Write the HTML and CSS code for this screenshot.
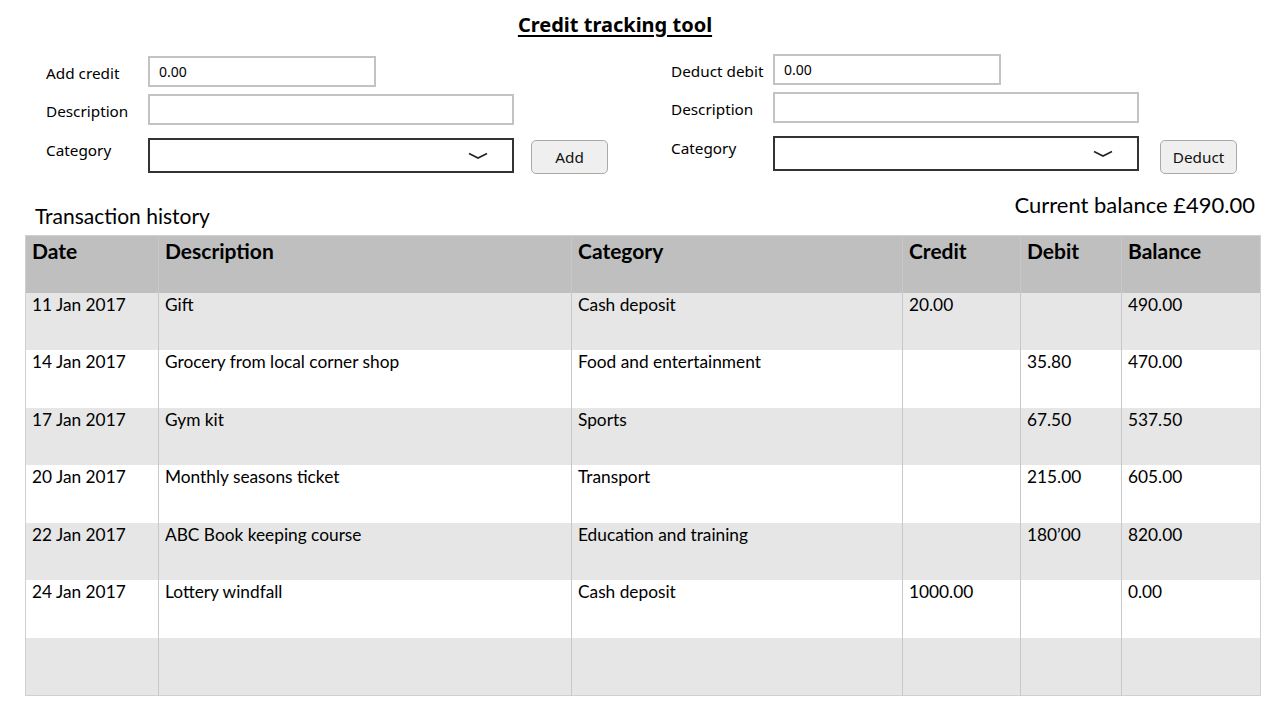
FILE: index.html
```html
<!DOCTYPE html>
<html>
<head>
<meta charset="utf-8">
<link rel="stylesheet" href="styles.css">
</head>
<body>
<h1 class="title">Credit tracking tool</h1>
<div class="forms">
  <div class="form">
    <label class="lbl l1">Add credit</label>
    <div class="field"><div class="input short">0.00</div></div>
    <label class="lbl l2">Description</label>
    <div class="field"><div class="input long"></div></div>
    <label class="lbl l3">Category</label>
    <div class="field row">
      <div class="select long"><svg class="chev" width="20" height="8" viewBox="0 0 20 8"><path d="M1 1.5 L10 6 L19 1.5" fill="none" stroke="#222" stroke-width="1.6"/></svg></div>
      <button class="btn add">Add</button>
    </div>
  </div>
  <div class="form right">
    <label class="lbl l1">Deduct debit</label>
    <div class="field"><div class="input short">0.00</div></div>
    <label class="lbl l2">Description</label>
    <div class="field"><div class="input long"></div></div>
    <label class="lbl l3">Category</label>
    <div class="field row">
      <div class="select long"><svg class="chev" width="20" height="8" viewBox="0 0 20 8"><path d="M1 1.5 L10 6 L19 1.5" fill="none" stroke="#222" stroke-width="1.6"/></svg></div>
      <button class="btn deduct">Deduct</button>
    </div>
  </div>
</div>
<div class="histhead">
  <div class="hist">Transaction history</div>
  <div class="bal">Current balance £490.00</div>
</div>
<table class="tx">
  <colgroup>
    <col class="c1"><col class="c2"><col class="c3"><col class="c4"><col class="c5"><col class="c6">
  </colgroup>
  <thead>
    <tr><th>Date</th><th>Description</th><th>Category</th><th>Credit</th><th>Debit</th><th>Balance</th></tr>
  </thead>
  <tbody>
    <tr><td>11 Jan 2017</td><td>Gift</td><td>Cash deposit</td><td>20.00</td><td></td><td>490.00</td></tr>
    <tr><td>14 Jan 2017</td><td>Grocery from local corner shop</td><td>Food and entertainment</td><td></td><td>35.80</td><td>470.00</td></tr>
    <tr><td>17 Jan 2017</td><td>Gym kit</td><td>Sports</td><td></td><td>67.50</td><td>537.50</td></tr>
    <tr><td>20 Jan 2017</td><td>Monthly seasons ticket</td><td>Transport</td><td></td><td>215.00</td><td>605.00</td></tr>
    <tr><td>22 Jan 2017</td><td>ABC Book keeping course</td><td>Education and training</td><td></td><td>180’00</td><td>820.00</td></tr>
    <tr><td>24 Jan 2017</td><td>Lottery windfall</td><td>Cash deposit</td><td>1000.00</td><td></td><td>0.00</td></tr>
    <tr><td></td><td></td><td></td><td></td><td></td><td></td></tr>
  </tbody>
</table>
</body>
</html>
```
FILE: styles.css
```css
* { box-sizing: border-box; }
body {
  margin: 0;
  background: #fff;
  color: #000;
  font-family: "Noto Sans", "Open Sans", sans-serif;
  width: 1275px;
  height: 707px;
  overflow: hidden;
}
.title {
  margin: 0;
  padding-top: 11px;
  padding-right: 45px;
  text-align: center;
  font-size: 20px;
  font-weight: bold;
  text-decoration: underline;
  text-underline-offset: 3px;
  text-decoration-thickness: 2px;
  line-height: 28px;
  height: 54px;
}
.forms {
  display: grid;
  grid-template-columns: 625px 600px;
  padding-left: 46px;
}
.form {
  display: grid;
  grid-template-columns: 102px auto;
  grid-template-rows: 31px 31px 35px;
  row-gap: 7px;
  align-items: start;
  font-size: 15.3px;
  margin-top: 2px;
}
.form.right { margin-top: 0; }
.lbl { line-height: 20px; }
.l1 { padding-top: 7px; }
.l2 { padding-top: 7px; }
.l3 { padding-top: 8px; }
.field.row { display: flex; align-items: flex-start; margin-top: 6px; }
.input {
  height: 31px;
  border: 2px solid #c3c3c3;
  background: #fff;
  padding: 4px 9px;
  font-size: 14px;
  line-height: 19px;
}
.short { width: 228px; }
.long { width: 366px; }
.select {
  height: 35px;
  border: 2px solid #333;
  position: relative;
}
.chev { position: absolute; right: 24px; top: 12px; }
.btn {
  margin-left: 17px;
  margin-top: 2px;
  width: 77px;
  height: 34px;
  background: #efefef;
  border: 1px solid #a9a9a9;
  border-radius: 5px;
  font-family: "Noto Sans", sans-serif;
  font-size: 15.3px;
  color: #111;
  padding: 0;
}
.right .btn { margin-left: 21px; margin-top: 4px; }
.histhead {
  display: flex;
  justify-content: space-between;
  align-items: flex-start;
  margin-top: 25px;
  padding: 0 20px 0 35px;
  font-family: "Lato", "Noto Sans", sans-serif;
  height: 43px;
}
.hist { font-size: 21px; margin-top: 12px; line-height: 24px; }
.bal { font-size: 22px; line-height: 26px; }
.tx {
  margin-left: 25px;
  width: 1235px;
  border-collapse: collapse;
  table-layout: fixed;
  font-family: "Lato", "Noto Sans", sans-serif;
  border: 1px solid #d0d0d0;
}
.c1 { width: 133px; }
.c2 { width: 413px; }
.c3 { width: 331px; }
.c4 { width: 118px; }
.c5 { width: 101px; }
.c6 { width: 139px; }
.tx th, .tx td {
  border-left: 1px solid #c8c8c8;
  text-align: left;
  vertical-align: top;
  padding: 0 6px;
}
.tx th:first-child, .tx td:first-child { border-left: none; }
.tx thead tr { background: #bfbfbf; height: 57px; }
.tx th {
  font-size: 21px;
  font-weight: bold;
  padding-top: 2px;
  line-height: 26px;
}
.tx tbody tr { height: 57.6px; }
.tx tbody tr:nth-child(odd) { background: #e6e6e6; }
.tx tbody tr:nth-child(even) { background: #fff; }
.tx td {
  font-size: 17.3px;
  padding-top: 2px;
  line-height: 20px;
}
```
